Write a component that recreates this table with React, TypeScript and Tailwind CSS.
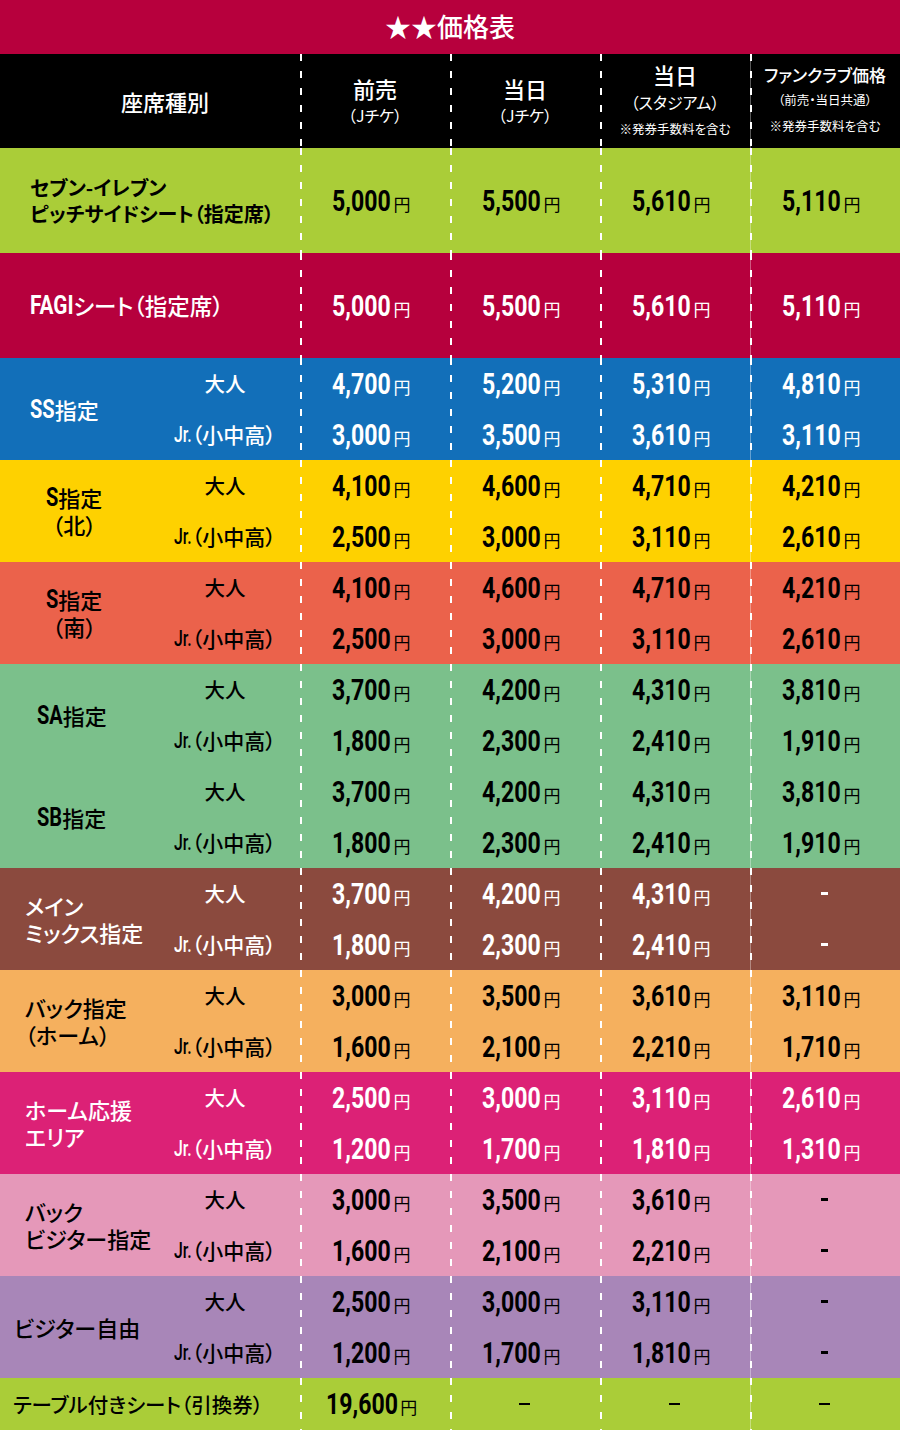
import type { ReactNode } from "react";

const JP = "font-['Noto_Sans_CJK_JP','Noto_Sans',sans-serif] [font-feature-settings:'palt']";
const NUM = "font-['Roboto','Liberation_Sans',sans-serif]";
const COLS = "grid grid-cols-[150px_150px_150px_150px_150px_150px]";
const DIVIDER =
  "bg-[linear-gradient(to_bottom,#fff_7px,transparent_7px)] bg-[length:2px_17px] bg-repeat-y";
// the last divider also has a faint solid hairline behind the dashes
const LAST = "shadow-[inset_1px_0_0_rgba(255,255,255,0.35)]";

// rough advance widths of Roboto Bold, used to close the gap left by scale-x
const W: Record<string, number> = {
  ",": 0.23, ".": 0.27, S: 0.61, A: 0.66, B: 0.63, F: 0.55, G: 0.68, I: 0.28, J: 0.55, r: 0.36,
};
const textWidth = (t: string, size: number) =>
  [...t].reduce((sum, c) => sum + (W[c] ?? 0.565), 0) * size;

// condensed latin: Roboto squeezed horizontally
const Cond = ({ t, size, sx, className }: { t: string; size: number; sx: number; className: string }) => (
  <span
    className={`inline-block origin-left ${NUM} ${className}`}
    style={{ marginRight: -(1 - sx) * textWidth(t, size) }}
  >
    {t}
  </span>
);

const Price = ({ v }: { v: string }) => {
  if (v === "-") return <span className="inline-block w-[7px] h-[3px] bg-current ml-[6px]" />;
  if (v === "—") return <span className="inline-block w-[11px] h-[2px] bg-current ml-[6px]" />;
  return (
    <span className="inline-flex items-baseline">
      <Cond t={v} size={30} sx={0.77} className="text-[30px] leading-none font-bold scale-x-[0.77]" />
      <span className={`${JP} text-[17px] leading-none ml-[2px]`}>円</span>
    </span>
  );
};

const Cell = ({ p, i }: { p: string; i: number }) => (
  <div className={`flex items-center justify-center pr-[7px] ${DIVIDER} ${i === 3 ? LAST : ""}`}>
    <Price v={p} />
  </div>
);

const Adult = () => <span className={`${JP} text-[20.5px] font-medium`}>大人</span>;
const Jr = () => (
  <span className="inline-flex items-center">
    <Cond t="Jr." size={22} sx={0.72} className="text-[22px] font-medium scale-x-[0.72]" />
    <span className={`${JP} text-[21px] font-medium`}>（小中高）</span>
  </span>
);

type Row = [string, string, string, string];

const Block = ({
  bg,
  light,
  label,
  labelCls,
  adult,
  jr,
}: {
  bg: string;
  light?: boolean;
  label: ReactNode;
  labelCls: string;
  adult: Row;
  jr: Row;
}) => (
  <div className={`${COLS} grid-rows-[51px_51px] ${bg} ${light ? "text-white" : "text-black"}`}>
    <div className={`row-span-2 flex items-center ${JP} text-[22px] leading-[27px] font-medium whitespace-nowrap ${labelCls}`}>
      {label}
    </div>
    <div className="flex items-center justify-center">
      <Adult />
    </div>
    {adult.map((p, i) => (
      <Cell key={i} p={p} i={i} />
    ))}
    <div className="flex items-center justify-center">
      <Jr />
    </div>
    {jr.map((p, i) => (
      <Cell key={i} p={p} i={i} />
    ))}
  </div>
);

const Single = ({ bg, light, label, prices }: { bg: string; light?: boolean; label: ReactNode; prices: Row }) => (
  <div className={`${COLS} grid-rows-[105px] ${bg} ${light ? "text-white" : "text-black"}`}>
    <div className={`col-span-2 flex items-center pl-[30px] ${JP}`}>{label}</div>
    {prices.map((p, i) => (
      <Cell key={i} p={p} i={i} />
    ))}
  </div>
);

const Latin = ({ t }: { t: string }) => (
  <Cond t={t} size={25} sx={0.8} className="text-[25px] font-bold scale-x-[0.8]" />
);

const HeadCell = ({ children, last }: { children: ReactNode; last?: boolean }) => (
  <div className={`flex flex-col items-center justify-center ${DIVIDER} ${last ? LAST : ""}`}>{children}</div>
);

export default function App() {
  return (
    <div className={`w-[900px] ${JP}`}>
      <div className="h-[54px] bg-[#b7003d] flex items-center justify-center text-white text-[26px] font-medium pb-[3px]">
        ★★価格表
      </div>

      <div className={`${COLS} grid-rows-[94px] bg-black text-white`}>
        <div className="col-span-2 flex items-center justify-center pl-[30px] text-[22px] font-medium">座席種別</div>
        <HeadCell>
          <span className="text-[22px] leading-[28px] font-medium">前売</span>
          <span className="text-[16px] leading-[26px]">（Jチケ）</span>
        </HeadCell>
        <HeadCell>
          <span className="text-[22px] leading-[28px] font-medium">当日</span>
          <span className="text-[16px] leading-[26px]">（Jチケ）</span>
        </HeadCell>
        <HeadCell>
          <span className="text-[22px] leading-[28px] font-medium">当日</span>
          <span className="text-[16px] leading-[28px]">（スタジアム）</span>
          <span className="text-[12.5px] leading-[26px]">※発券手数料を含む</span>
        </HeadCell>
        <HeadCell last>
          <span className="text-[17px] leading-[24px] font-medium">ファンクラブ価格</span>
          <span className="text-[12.5px] leading-[26px]">（前売・当日共通）</span>
          <span className="text-[12.5px] leading-[26px]">※発券手数料を含む</span>
        </HeadCell>
      </div>

      <Single
        bg="bg-[#aacd38]"
        label={
          <div className="text-[20px] leading-[26px] font-bold">
            セブン-イレブン
            <br />
            ピッチサイドシート（指定席）
          </div>
        }
        prices={["5,000", "5,500", "5,610", "5,110"]}
      />
      <Single
        bg="bg-[#b6003d]"
        light
        label={
          <div className="flex items-center text-[22.5px] font-medium">
            <Cond t="FAGI" size={26} sx={0.8} className="text-[26px] font-bold scale-x-[0.8]" />
            シート（指定席）
          </div>
        }
        prices={["5,000", "5,500", "5,610", "5,110"]}
      />

      <Block
        bg="bg-[#126fb9]"
        light
        labelCls="pl-[30px]"
        label={
          <span className="flex items-center">
            <Latin t="SS" />
            指定
          </span>
        }
        adult={["4,700", "5,200", "5,310", "4,810"]}
        jr={["3,000", "3,500", "3,610", "3,110"]}
      />
      <Block
        bg="bg-[#fed100]"
        labelCls="pl-[46px]"
        label={
          <div className="flex flex-col items-center">
            <span className="flex items-center">
              <Latin t="S" />
              指定
            </span>
            <span>（北）</span>
          </div>
        }
        adult={["4,100", "4,600", "4,710", "4,210"]}
        jr={["2,500", "3,000", "3,110", "2,610"]}
      />
      <Block
        bg="bg-[#eb624b]"
        labelCls="pl-[46px]"
        label={
          <div className="flex flex-col items-center">
            <span className="flex items-center">
              <Latin t="S" />
              指定
            </span>
            <span>（南）</span>
          </div>
        }
        adult={["4,100", "4,600", "4,710", "4,210"]}
        jr={["2,500", "3,000", "3,110", "2,610"]}
      />
      <Block
        bg="bg-[#7bc08b]"
        labelCls="pl-[37px]"
        label={
          <span className="flex items-center">
            <Latin t="SA" />
            指定
          </span>
        }
        adult={["3,700", "4,200", "4,310", "3,810"]}
        jr={["1,800", "2,300", "2,410", "1,910"]}
      />
      <Block
        bg="bg-[#7bc08b]"
        labelCls="pl-[37px]"
        label={
          <span className="flex items-center">
            <Latin t="SB" />
            指定
          </span>
        }
        adult={["3,700", "4,200", "4,310", "3,810"]}
        jr={["1,800", "2,300", "2,410", "1,910"]}
      />
      <Block
        bg="bg-[#8b4a3e]"
        light
        labelCls="pl-[25px]"
        label={
          <div>
            メイン
            <br />
            ミックス指定
          </div>
        }
        adult={["3,700", "4,200", "4,310", "-"]}
        jr={["1,800", "2,300", "2,410", "-"]}
      />
      <Block
        bg="bg-[#f5b05e]"
        labelCls="pl-[25px]"
        label={
          <div>
            バック指定
            <br />
            （ホーム）
          </div>
        }
        adult={["3,000", "3,500", "3,610", "3,110"]}
        jr={["1,600", "2,100", "2,210", "1,710"]}
      />
      <Block
        bg="bg-[#dc2176]"
        light
        labelCls="pl-[25px]"
        label={
          <div>
            ホーム応援
            <br />
            エリア
          </div>
        }
        adult={["2,500", "3,000", "3,110", "2,610"]}
        jr={["1,200", "1,700", "1,810", "1,310"]}
      />
      <Block
        bg="bg-[#e598b9]"
        labelCls="pl-[25px]"
        label={
          <div>
            バック
            <br />
            ビジター指定
          </div>
        }
        adult={["3,000", "3,500", "3,610", "-"]}
        jr={["1,600", "2,100", "2,210", "-"]}
      />
      <Block
        bg="bg-[#a886b8]"
        labelCls="pl-[14px]"
        label={<span>ビジター自由</span>}
        adult={["2,500", "3,000", "3,110", "-"]}
        jr={["1,200", "1,700", "1,810", "-"]}
      />

      <div className={`${COLS} grid-rows-[52px] bg-[#aacd38] text-black`}>
        <div className="col-span-2 flex items-center pl-[13px] text-[20.5px] font-medium whitespace-nowrap">
          テーブル付きシート（引換券）
        </div>
        {["19,600", "—", "—", "—"].map((p, i) => (
          <Cell key={i} p={p} i={i} />
        ))}
      </div>
    </div>
  );
}
